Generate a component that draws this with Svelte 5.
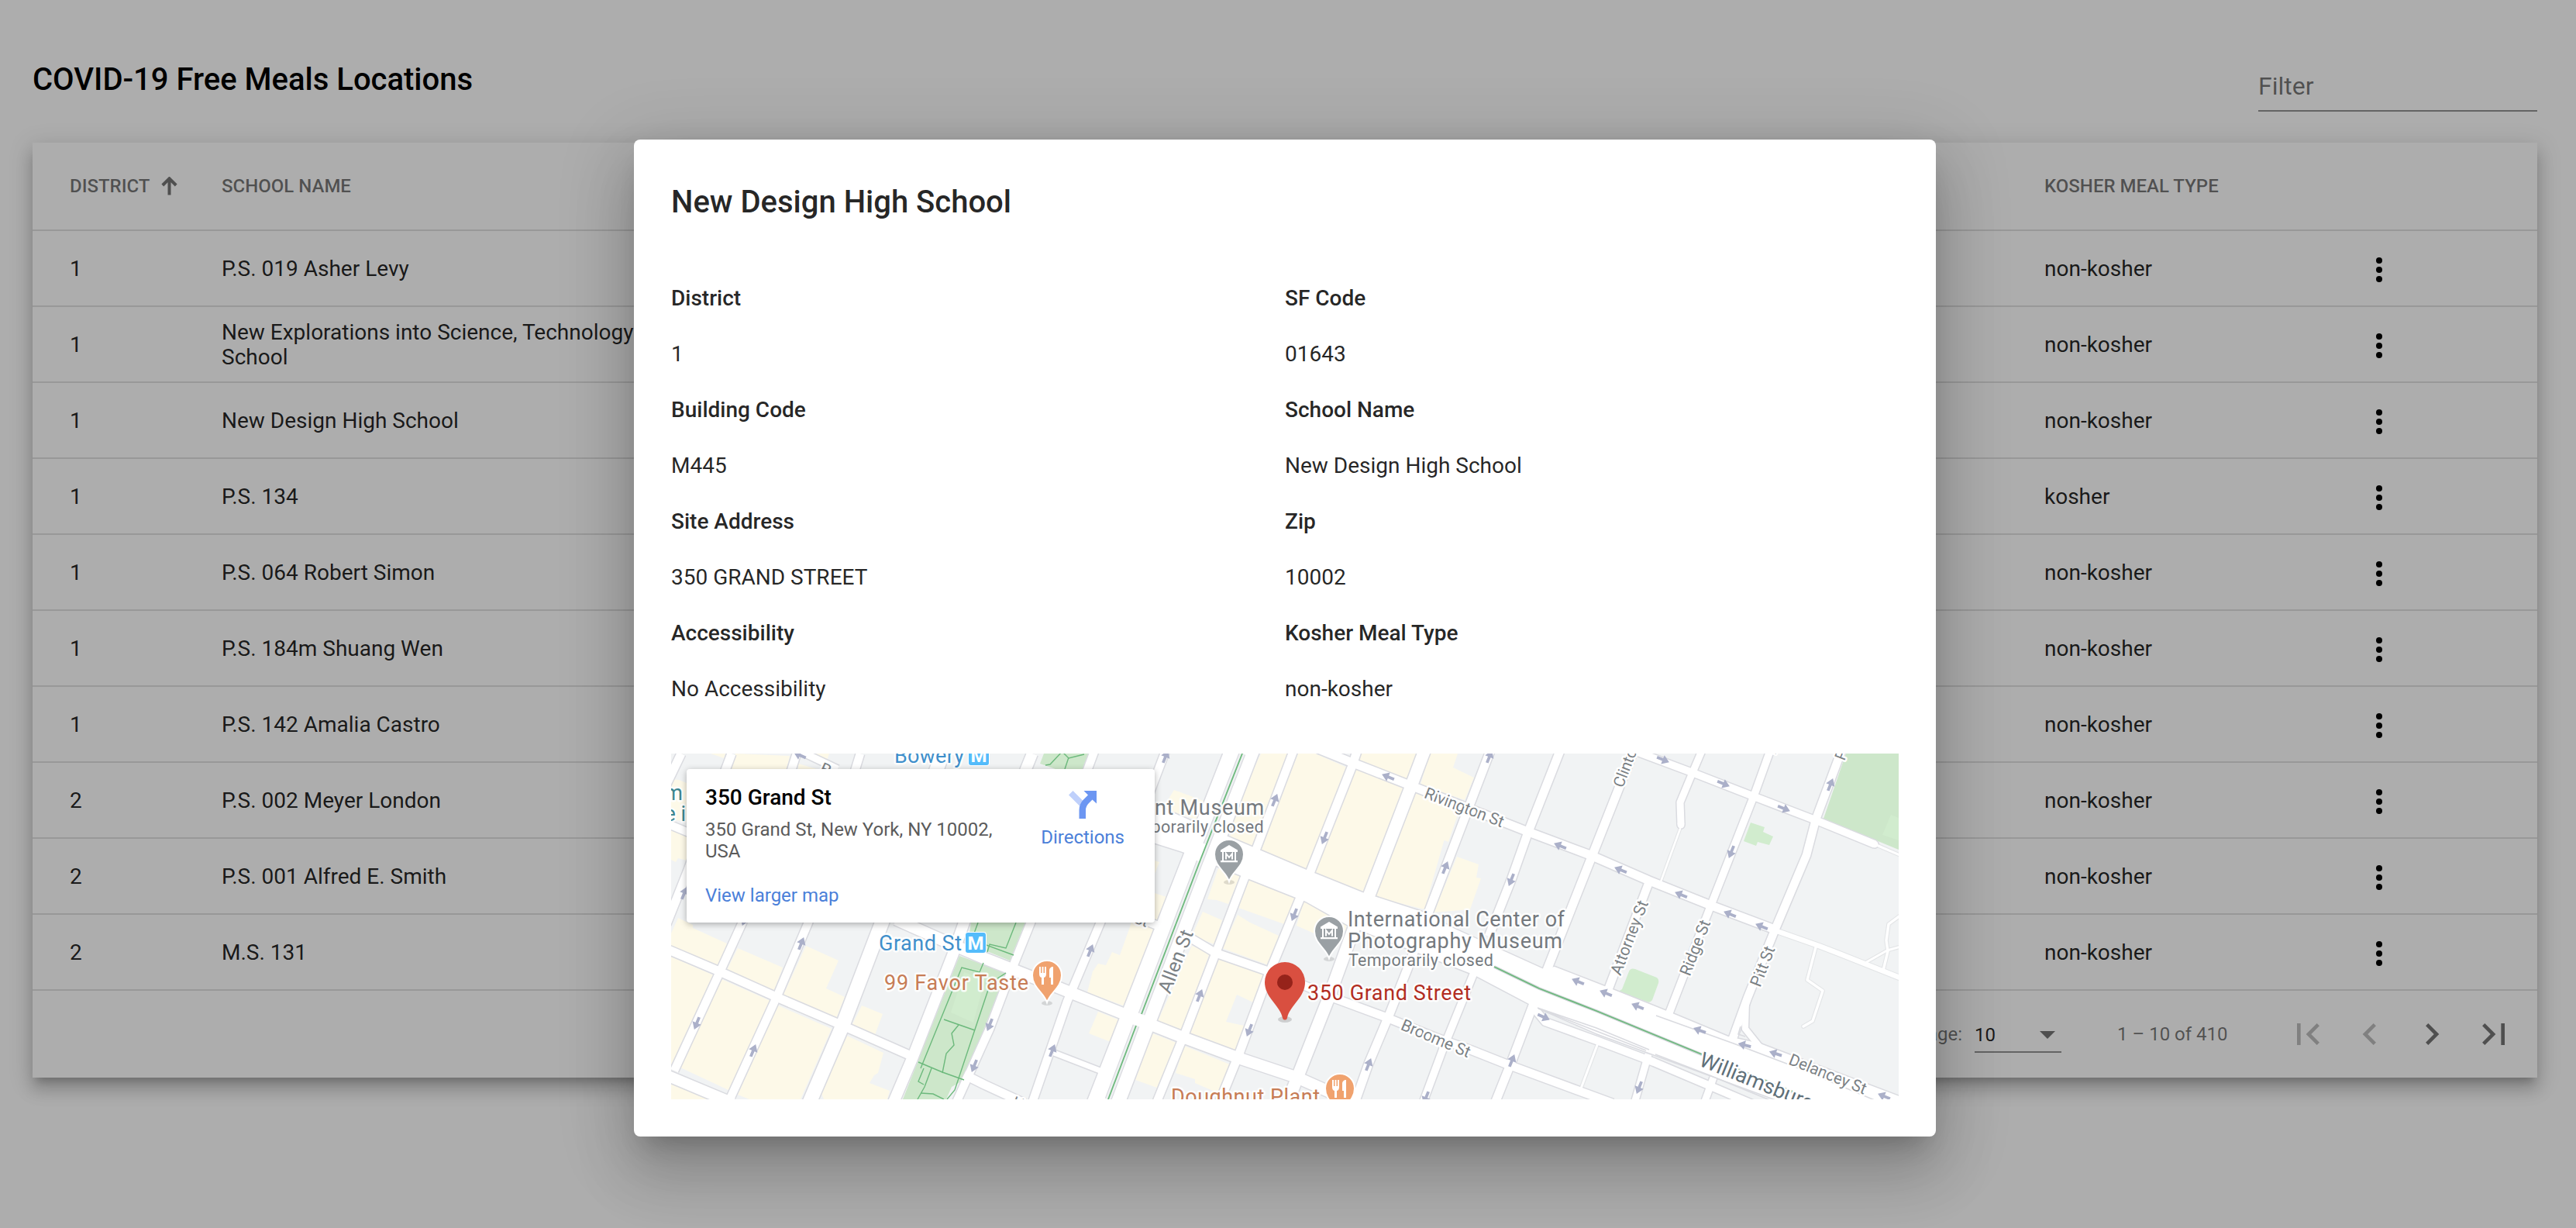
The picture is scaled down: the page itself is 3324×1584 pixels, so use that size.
<script>
  const rows = [
    ['1', 'P.S. 019 Asher Levy', 'non-kosher'],
    ['1', 'New Explorations into Science, Technology and Math School', 'non-kosher'],
    ['1', 'New Design High School', 'non-kosher'],
    ['1', 'P.S. 134', 'kosher'],
    ['1', 'P.S. 064 Robert Simon', 'non-kosher'],
    ['1', 'P.S. 184m Shuang Wen', 'non-kosher'],
    ['1', 'P.S. 142 Amalia Castro', 'non-kosher'],
    ['2', 'P.S. 002 Meyer London', 'non-kosher'],
    ['2', 'P.S. 001 Alfred E. Smith', 'non-kosher'],
    ['2', 'M.S. 131', 'non-kosher']
  ];

  const details = [
    ['District', '1'],
    ['SF Code', '01643'],
    ['Building Code', 'M445'],
    ['School Name', 'New Design High School'],
    ['Site Address', '350 GRAND STREET'],
    ['Zip', '10002'],
    ['Accessibility', 'No Accessibility'],
    ['Kosher Meal Type', 'non-kosher']
  ];

  const pagerIcons = [
    { off: true, d: 'M18.41 16.59L13.82 12l4.59-4.59L17 6l-6 6 6 6zM6 6h2v12H6z' },
    { off: true, d: 'M15.41 7.41L14 6l-6 6 6 6 1.41-1.41L10.83 12z' },
    { off: false, d: 'M10 6L8.59 7.41 13.17 12l-4.58 4.59L10 18l6-6z' },
    { off: false, d: 'M5.59 7.41L10.18 12l-4.59 4.59L7 18l6-6-6-6zM16 6h2v12h-2z' }
  ];

  // Commercial blocks, painted below the streets
  const blocks = [
    '9,212 28,221 28,225 72,245 60,280 0,252 0,232',
    '86,251 144,276 132,308 71,281',
    '174,248 216,267 200,303 224,314 212,344 144,313',
    '0,262 55,286 0,402',
    '65,291 128,319 76,435 12,405',
    '138,325 207,355 167,446 101,446 86,440',
    '246,325 273,336 263,363 232,353',
    '227,364 274,386 267,412 262,415 256,425 282,435 279,446 197,446 193,436',
    '0,95 20,103 20,138 9,135 6,140 0,137',
    '0,33 10,34 20,38 20,88 0,85',
    '83,0 153,3 149,20 77,20',
    '164,13 188,20 164,20',
    '51,0 70,0 68,6',
    '177,0 204,0 200,12',
    '0,425 47,446 0,446',
    '594,218 623,226 586,326 537,308 544,281 551,271 561,273 569,256 579,260',
    '551,333 579,344 567,372 539,361',
    '621,361 652,373 627,431 599,421',
    '662,377 721,401 706,438 676,425 676,420 651,412',
    '672,248 695,257 659,356 628,345',
    '706,262 766,285 751,321 730,311 716,346 739,351 728,385 670,361',
    '706,148 734,158 719,194 704,189 692,188',
    '686,204 711,215 701,246 672,235',
    '746,162 806,186 794,221 732,199',
    '731,208 747,218 784,235 771,273 711,251',
    '816,191 874,215 870,228 832,233 807,222',
    '894,225 967,251 961,255 890,235',
    '761,0 796,0 749,121 721,108 734,58',
    '809,0 831,0 872,18 819,150 761,125',
    '883,20 946,45 892,179 831,155',
    '890,0 962,0 949,33 886,11',
    '979,0 1015,0 1009,18 1036,31 1024,60 967,40',
    '961,51 1017,73 1003,114 991,109 994,103 1000,103 972,201 909,185',
    '1014,133 1042,143 1039,160 1045,161 1031,201 984,205',
    '649,47 687,61 677,85 634,71',
    '624,138 630,140 624,155',
    '624,180 639,185 627,216 620,215'
  ];

  // [centre line, width]
  const streets = [
    ['13,0 -10,48', 11],
    ['78,0 22,150 -6,220', 11],
    ['162,0 92,218 60,288 4,409', 10.5],
    ['244,0 177,218 138,310 73,452', 10.5],
    ['350,0 272,218 222,349 176,456', 18],
    ['466,0 378,218 364,258 312,391 286,452', 14],
    ['548,-8 464,218 443,270 411,355 368,450', 10.5],
    ['639,-6 554,218 511,320 465,453', 10.5],
    ['804,-6 755,123 740,160 706,249 664,358 626,451', 10.5],
    ['886,-6 878,18 825,152 811,188 771,285 733,387 707,451', 11],
    ['973,-6 953,47 901,182 883,220 847,319 808,418 795,451', 15.5],
    ['1058,-6 978,203 950,278 927,336 900,400 882,451', 11],
    ['1148,-6 1106,101 1084,163 1055,236', 11],
    ['1046,255 1035,285 996,381 970,451', 9.5],
    ['1243,-6 1186,138 1131,277 1112,325 1085,396 1063,451', 11],
    ['1331,-6 1317,27 1302,63 1303,91', 9],
    ['1261,168 1209,305', 10.5],
    ['1419,-6 1397,55 1342,195 1287,337', 9.5],
    ['1511,-6 1477,85 1465,131 1424,228 1389,315 1369,370', 10.5],
    ['1387,318 1386,355 1410,385', 8],
    ['1261,388 1243,451', 9],
    ['1345,418 1333,451', 9],
    ['-6,90 30,105', 10],
    ['160,-6 215,20', 9],
    ['-6,252 60,280 138,315 217,349 312,391', 11],
    ['378,414 404,427 456,451', 11],
    ['-6,415 80,451', 14],
    ['290,214 362,246 404,264 480,294 582,335 655,364 733,393 808,418 880,450', 14.5],
    ['494,386 556,410', 7],
    ['600,211 672,239 702,257 771,281 814,298 857,316 922,340 986,366 1031,382 1079,401 1174,436 1215,451', 10.5],
    ['835,-6 877,11 951,40 1106,101 1186,131 1262,164 1342,196 1424,227', 11],
    ['1236,-6 1319,25 1396,55 1477,86 1553,117', 9.5],
    ['1113,328 1128,346 1194,370 1268,398 1360,437 1395,452', 10]
  ];

  const lanes = [
    ['1302,97 1276,168', 2.6],
    ['1553,117 1590,133', 3],
    ['1424,228 1481,248 1507,258 1590,291', 6.5],
    ['1477,250 1466,292 1486,306 1473,345 1461,352', 3.4],
    ['1539,271 1569,254 1590,248', 3],
    ['1590,206 1571,220 1568,241 1570,255 1564,280', 3.4],
    ['1195,376 1174,432', 3]
  ];

  const boulevards = [
    'M713,-2L759,-2L587,448L537,448Z',
    'M600,55L674,88L761,125L820,150L892,179L972,205L1011,226L1126,278L1140,275L1207,301L1287,333L1364,365L1405,374L1590,444L1590,460L1425,446L1194,361L1107,323L1035,285L874,222L819,191L746,162L663,128L600,108Z'
  ];

  const paths = [
    '396,218 388,240 442,260', '445,218 432,251 411,246 408,256',
    '403,270 398,282 375,276 322,406', '352,343 392,357', '432,283 412,296 366,434 356,446',
    '371,350 362,361 365,376 355,387 350,412', '319,398 350,411 378,421',
    '336,406 327,430 318,446', '326,406 319,423 326,427', '322,438 338,439 352,446',
    '504,-2 489,14 483,15', '505,-2 513,6 533,1', '513,5 508,20'
  ];

  const median = ['737,0 683,137', '683,137 607,336', '600,351 564,446', '1062,275 1120,303 1194,332 1330,388', '1376,407 1472,446'];

  // [x, y, clockwise angle from north]
  const arrows = [
    [17, 180, 22], [168, 245, 22], [33, 348, 202], [106, 383, 22], [411, 350, 202], [391, 403, 202],
    [541, 254, 22], [492, 383, 22], [638, 4, 22], [779, 60, 22], [804, 208, 202], [682, 312, 22],
    [746, 357, 202], [166, 2, -66], [95, 214, 202], [925, 30, -68], [843, 109, 202], [999, 147, 22], [1056, 4, 22],
    [1084, 163, 202], [1147, 119, -68], [900, 401, 22], [1085, 396, 22], [974, 444, 202],
    [1170, 294, -68], [1126, 340, 115], [1280, 8, 112], [1358, 39, 112], [1436, 71, 112], [1496, 40, 22],
    [1368, 127, 202], [1225, 150, -68], [1303, 182, -68], [1366, 207, -68], [1407, 223, -68],
    [1206, 309, -68], [1247, 326, -68], [1327, 357, -70], [1385, 376, -76], [1425, 387, -72],
    [1249, 431, 202], [1565, 442, -68]
  ];

  // [text, x, y, angle, length, size]
  const streetNames = [
    ['Allen St', 659, 271, -69, 85, 25],
    ['Rivington St', 1021, 76, 21, 108, 21],
    ['Broome St', 984, 374, 23, 95, 21],
    ['Attorney St', 1243, 240, -69, 101, 21],
    ['Ridge St', 1328, 253, -69, 75, 21],
    ['Pitt St', 1415, 277, -69, 54, 21],
    ['Delancey St', 1490, 420, 22, 106, 21]
  ];
</script>

{#snippet museumPin(x, y)}
  <g transform="translate({x} {y})">
    <ellipse cx="0" cy="36" rx="7" ry="3" fill="#000" opacity=".12" />
    <path d="M0 35C-4 22-19 16-19 0a19 19 0 0 1 38 0C19 16 4 22 0 35z" fill="#9aa0a4" stroke="#fff" stroke-width="2" />
    <path d="M-11-5.500L0-12 11-5.500V-3H-11zM-9-3H-7V8H-9zM7-3H9V8H7zM-11 8H11V10.300H-11z" fill="#fff" />
    <path d="M-4 6.500V-1L0 4 4-1V6.500" fill="none" stroke="#fff" stroke-width="2" />
  </g>
{/snippet}

{#snippet foodPin(x, y)}
  <g transform="translate({x} {y})">
    <ellipse cx="0" cy="36" rx="7" ry="3" fill="#000" opacity=".12" />
    <path d="M0 35C-4 22-19 16-19 0a19 19 0 0 1 38 0C19 16 4 22 0 35z" fill="#f0a26e" stroke="#fff" stroke-width="2" />
    <path d="M-10-11h2v8h1.500v-8h2v8H-3v-8h2v9c0 3-1 4.500-3 5v9h-3V3c-2-.500-3-2-3-5zM3-6c0-3 2-5 5-5V12H5V3H3z" fill="#fff" />
  </g>
{/snippet}

<div class="page">
  <header class="top">
    <h1>COVID-19 Free Meals Locations</h1>
    <div class="filter">Filter</div>
  </header>

  <section class="card">
    <div class="row head">
      <div class="sorted">
        DISTRICT
        <svg width="24" height="24" viewBox="0 0 24 24"><path d="M11.500 23.500V3M2.800 11L11.500 2.300 20.200 11" fill="none" stroke="currentColor" stroke-width="4" /></svg>
      </div>
      <div>SCHOOL NAME</div>
      <div></div>
      <div>KOSHER MEAL TYPE</div>
      <div></div>
    </div>
    {#each rows as [district, name, kosher]}
      <div class="row">
        <div>{district}</div>
        <div>{name}</div>
        <div></div>
        <div>{kosher}</div>
        <div class="more">
          <svg width="48" height="48" viewBox="0 0 48 48"><circle cx="24" cy="12" r="4" /><circle cx="24" cy="24" r="4" /><circle cx="24" cy="36" r="4" /></svg>
        </div>
      </div>
    {/each}
    <footer class="pager">
      <span class="per">Items per page:</span>
      <div class="select"><span>10</span><i></i></div>
      <span class="range">1 – 10 of 410</span>
      {#each pagerIcons as icon}
        <button class:off={icon.off} aria-label="page"><svg width="56" height="56" viewBox="0 0 24 24"><path d={icon.d} /></svg></button>
      {/each}
    </footer>
  </section>

  <div class="backdrop">
    <div class="dialog">
      <h2>New Design High School</h2>
      <div class="details">
        {#each details as [label, value]}
          <dl>
            <dt>{label}</dt>
            <dd>{value}</dd>
          </dl>
        {/each}
      </div>

      <div class="map">
        <svg class="canvas" width="1584" height="446" viewBox="0 0 1584 446">
          <rect width="1584" height="446" fill="#f1f3f4" />
          {#each blocks as b}<polygon points={b} fill="#fdf9e8" />{/each}

          <g fill="#cde7ca">
            <path d="M387 218H457L437 267 383 245zM372 261L432 283 378 421 362 430 355 446H299zM481 0H541L532 20H496L476 13z" />
            <path d="M1516 0H1584V124L1487 84z" />
          </g>
          <g fill="#d1ecce">
            <path d="M1574 79L1584 83V112L1563 105z" />
            <path d="M1393 89L1411 95 1409 101 1422 107 1417 118 1402 114 1400 119 1384 113z" />
            <path d="M1236 281Q1238 276 1244 278L1272 289Q1275 291 1274 296L1266 318Q1263 322 1259 320L1222 307 1227 304z" />
            <path d="M378 282L405 292 390 347 361 334z" />
          </g>

          <g fill="none" stroke-linejoin="round">
            {#each lanes as [pts, w]}<polyline points={pts} stroke="#e3e5e7" stroke-width={w + 2.2} stroke-linecap="round" />{/each}
            {#each streets as [pts, w]}<polyline points={pts} stroke="#dadbe0" stroke-width={w + 3} />{/each}
            {#each boulevards as d}<path {d} stroke="#dadbe0" stroke-width="3" />{/each}
            <path d="M1303 91V92M1552 116.500L1553 117" stroke="#dadbe0" stroke-width="12" stroke-linecap="round" />
            {#each lanes as [pts, w]}<polyline points={pts} stroke="#fff" stroke-width={w} stroke-linecap="round" />{/each}
            {#each streets as [pts, w]}<polyline points={pts} stroke="#fff" stroke-width={w} />{/each}
            <path d="M1303 91V92M1552 116.500L1553 117" stroke="#fff" stroke-width="9" stroke-linecap="round" />
          </g>
          {#each boulevards as d}<path {d} fill="#fff" />{/each}

          <g fill="none">
            <path d="M737 0L683 137M683 137L607 336M600 351L564 446" stroke="#dadbe0" stroke-width="9" />
            <path d="M737 0L683 137M683 137L607 336M600 351L564 446" stroke="#eff1f2" stroke-width="6.500" />
            <path d="M672 110L690 117 681 139 663 132z" fill="#fff" />
            <path d="M1271 338L1371 374 1450 404 1560 450M1118 328L1194 354 1262 382M1119 329L1194 358 1258 383M1270 388L1340 415 1425 450M1380 352L1377 362 1386 365" stroke="#dadbe0" stroke-width="1.600" />
            <path d="M1062 275L1120 303 1194 332 1472 447" stroke="#d5d7dc" stroke-width="4" />
            {#each paths as p}<polyline points={p} stroke="#6cb97c" stroke-width="1.400" />{/each}
            {#each median as p}<polyline points={p} stroke="#6cb97c" stroke-width="1.800" />{/each}
          </g>

          {#each arrows as [x, y, a]}
            <path transform="translate({x} {y}) rotate({a})" d="M0-8.500L6 .500H1.900V8.500H-1.900V.500H-6z" fill="#abb0c9" />
          {/each}

          <g class="label street">
            {#each streetNames as [t, x, y, a, len, size]}
              <text transform="translate({x} {y}) rotate({a})" text-anchor="middle" font-size={size} textLength={len}>{t}</text>
            {/each}
            <text transform="translate(1228 45) rotate(-69)" font-size="20">Clinton St</text>
            <text transform="translate(1514 10) rotate(-69)" font-size="20">Pitt St</text>
            <text transform="translate(1425 2) rotate(-69)" font-size="20">Ridge St</text>
            <text transform="translate(190 25) rotate(24)" font-size="22">Broome St</text>
            <text transform="translate(613 224) rotate(20)" font-size="20" text-anchor="end">Broome St</text>
            <text transform="translate(439 455) rotate(20)" font-size="20">Hester St</text>
            <text class="bridge" transform="translate(1325 402) rotate(22)">Williamsburg Bridge</text>
          </g>

          <g class="label" font-size="27">
            <g fill="#3f8fcb">
              <text x="288" y="12" textLength="90">Bowery</text>
              <text x="268" y="254" textLength="107">Grand St</text>
            </g>
            <g fill="#3d868f">
              <text x="15" y="60" text-anchor="end">Museum</text>
              <text x="19" y="87" text-anchor="end">Chinese i</text>
            </g>
            <g fill="#c77c55">
              <text x="275" y="305" textLength="186">99 Favor Taste</text>
              <text x="645" y="452" textLength="192">Doughnut Plant</text>
            </g>
            <g fill="#74797e">
              <text x="766" y="79" text-anchor="end" letter-spacing=".7">Tenement Museum</text>
              <text x="765" y="102" text-anchor="end" font-size="21.500" letter-spacing=".4">Temporarily closed</text>
              <text x="873" y="223" textLength="280">International Center of</text>
              <text x="873" y="251" textLength="277">Photography Museum</text>
              <text x="874" y="274" textLength="187" font-size="21.500">Temporarily closed</text>
            </g>
            <text x="821" y="318" textLength="211" fill="#b22d22">350 Grand Street</text>
          </g>

          {#each [[384, -11], [380, 231]] as [x, y]}
            <g transform="translate({x} {y})">
              <rect x="-1" y="-1" width="28" height="28" rx="4" fill="#fff" />
              <rect width="26" height="26" rx="3" fill="#54bcfb" />
              <text class="metro" x="13" y="21.500" text-anchor="middle">M</text>
            </g>
          {/each}

          {@render museumPin(720, 130)}
          {@render museumPin(849, 229)}
          {@render foodPin(485, 286)}
          {@render foodPin(863, 432)}
          <g transform="translate(792 295)">
            <ellipse cx="0" cy="48" rx="9" ry="4" fill="#000" opacity=".15" />
            <path d="M0 48.500C-1.500 48.500-2.500 48-3 46C-6 30-26 20-26 0a26 26 0 0 1 52 0C26 20 6 30 3 46C2.500 48 1.500 48.500 0 48.500z" fill="#d94f40" />
            <circle r="10" fill="#96231a" />
          </g>
        </svg>

        <div class="place">
          <div class="info">
            <strong>350 Grand St</strong>
            <p>350 Grand St, New York, NY 10002, USA</p>
            <span class="link">View larger map</span>
          </div>
          <div class="directions">
            <svg width="36" height="36" viewBox="0 0 36 36">
              <path d="M5.500 0L0 5.500 14 19.500 18.500 13z" fill="#bfd0fb" />
              <path d="M19.500 0H36V16.500L30.500 11.500 26 16Q22 20 22 25V36H13.500V25Q13.500 17 19 11.500L25 5.500z" fill="#6c96f2" />
            </svg>
            <span class="link">Directions</span>
          </div>
        </div>
      </div>
    </div>
  </div>
</div>

<style>
  :global(body) {
    margin: 0;
    overflow: hidden;
    background: #fff;
  }
  .page {
    position: relative;
    box-sizing: border-box;
    width: 3324px;
    height: 1584px;
    padding: 64px 50px 0 42px;
    overflow: hidden;
    font-family: Roboto, sans-serif;
    font-size: 28px;
    color: rgba(0, 0, 0, 0.87);
  }
  .top {
    display: flex;
    justify-content: space-between;
    align-items: flex-start;
    height: 120px;
  }
  h1 {
    margin: 15px 0 0;
    font-size: 40px;
    line-height: 48px;
    font-weight: 500;
    color: #000;
  }
  .filter {
    box-sizing: border-box;
    width: 360px;
    height: 80px;
    padding-top: 28px;
    border-bottom: 2px solid rgba(0, 0, 0, 0.42);
    font-size: 32px;
    line-height: 38px;
    color: rgba(0, 0, 0, 0.54);
  }
  .card {
    background: #fff;
    box-shadow:
      0 10px 10px -6px rgba(0, 0, 0, 0.2),
      0 16px 20px 2px rgba(0, 0, 0, 0.14),
      0 6px 28px 4px rgba(0, 0, 0, 0.12);
  }
  .row {
    display: grid;
    grid-template-columns: 196px 700px 1fr 408px 228px;
    align-items: center;
    box-sizing: border-box;
    height: 98px;
    padding: 2px 0 0 48px;
    border-bottom: 2px solid rgba(0, 0, 0, 0.12);
    line-height: 32px;
  }
  .head {
    height: 114px;
    padding-top: 0;
    font-size: 24px;
    font-weight: 500;
    color: rgba(0, 0, 0, 0.54);
  }
  .sorted {
    display: flex;
    align-items: center;
    gap: 14px;
  }
  .more {
    display: flex;
    padding-top: 2px;
  }
  .pager {
    display: flex;
    align-items: center;
    justify-content: flex-end;
    height: 112px;
    padding-right: 16px;
    font-size: 24px;
    color: rgba(0, 0, 0, 0.54);
  }
  .per {
    margin-right: 16px;
  }
  .select {
    display: flex;
    justify-content: space-between;
    align-items: center;
    box-sizing: border-box;
    width: 112px;
    height: 48px;
    margin-right: 72px;
    padding: 3px 8px 0 0;
    border-bottom: 2px solid rgba(0, 0, 0, 0.42);
    color: rgba(0, 0, 0, 0.87);
  }
  .select i {
    border: 10px solid transparent;
    border-top-color: rgba(0, 0, 0, 0.54);
    border-bottom: 0;
  }
  .range {
    width: 206px;
  }
  button {
    display: flex;
    justify-content: center;
    align-items: center;
    width: 80px;
    height: 80px;
    padding: 0;
    border: 0;
    background: none;
    color: rgba(0, 0, 0, 0.54);
  }
  button svg {
    fill: currentColor;
  }
  button.off {
    color: rgba(0, 0, 0, 0.26);
  }
  .backdrop {
    position: absolute;
    inset: 0;
    display: flex;
    justify-content: center;
    align-items: flex-start;
    padding: 180px 8px 0 0;
    background: rgba(0, 0, 0, 0.32);
  }
  .dialog {
    box-sizing: border-box;
    width: 1680px;
    height: 1286px;
    padding: 49px 48px 48px;
    border-radius: 8px;
    background: #fff;
    box-shadow:
      0 22px 30px -14px rgba(0, 0, 0, 0.2),
      0 48px 76px 6px rgba(0, 0, 0, 0.14),
      0 18px 92px 16px rgba(0, 0, 0, 0.12);
  }
  h2 {
    margin: 0;
    font-size: 40px;
    line-height: 64px;
    font-weight: 500;
  }
  .details {
    display: grid;
    grid-template-columns: 1fr 1fr;
    margin-top: 56px;
  }
  dl,
  dd {
    margin: 0;
  }
  dt,
  dd {
    line-height: 72px;
  }
  dt {
    font-weight: 500;
  }
  .map {
    position: relative;
    height: 446px;
    margin-top: 47px;
  }
  .canvas {
    display: block;
  }
  .label {
    font-family: Roboto, sans-serif;
    paint-order: stroke;
    stroke: rgba(255, 255, 255, 0.85);
    stroke-width: 5px;
    stroke-linejoin: round;
  }
  .street {
    fill: #7b8185;
    stroke: #fff;
  }
  .bridge {
    font-size: 27px;
    fill: #5f7079;
  }
  .metro {
    font-size: 24px;
    font-weight: 700;
    fill: #fff;
  }
  .place {
    position: absolute;
    left: 20px;
    top: 20px;
    display: flex;
    box-sizing: border-box;
    width: 604px;
    height: 198px;
    padding: 18px 39px 0 24px;
    border-radius: 4px;
    background: #fff;
    box-shadow: 0 2px 8px rgba(0, 0, 0, 0.3);
    font-size: 24px;
    line-height: 28px;
  }
  .info {
    display: flex;
    flex-direction: column;
    flex: 1;
  }
  .info strong {
    margin-top: 1px;
    font-size: 28px;
    line-height: 36px;
    font-weight: 500;
    color: #000;
  }
  .info p {
    width: 390px;
    margin: 9px 0 29px;
    color: #5b5b5b;
  }
  .link {
    color: #4b80d9;
  }
  .directions {
    display: flex;
    flex-direction: column;
    align-items: center;
    gap: 12px;
    padding-top: 10px;
  }
  .directions .link {
    line-height: 24px;
  }
</style>
